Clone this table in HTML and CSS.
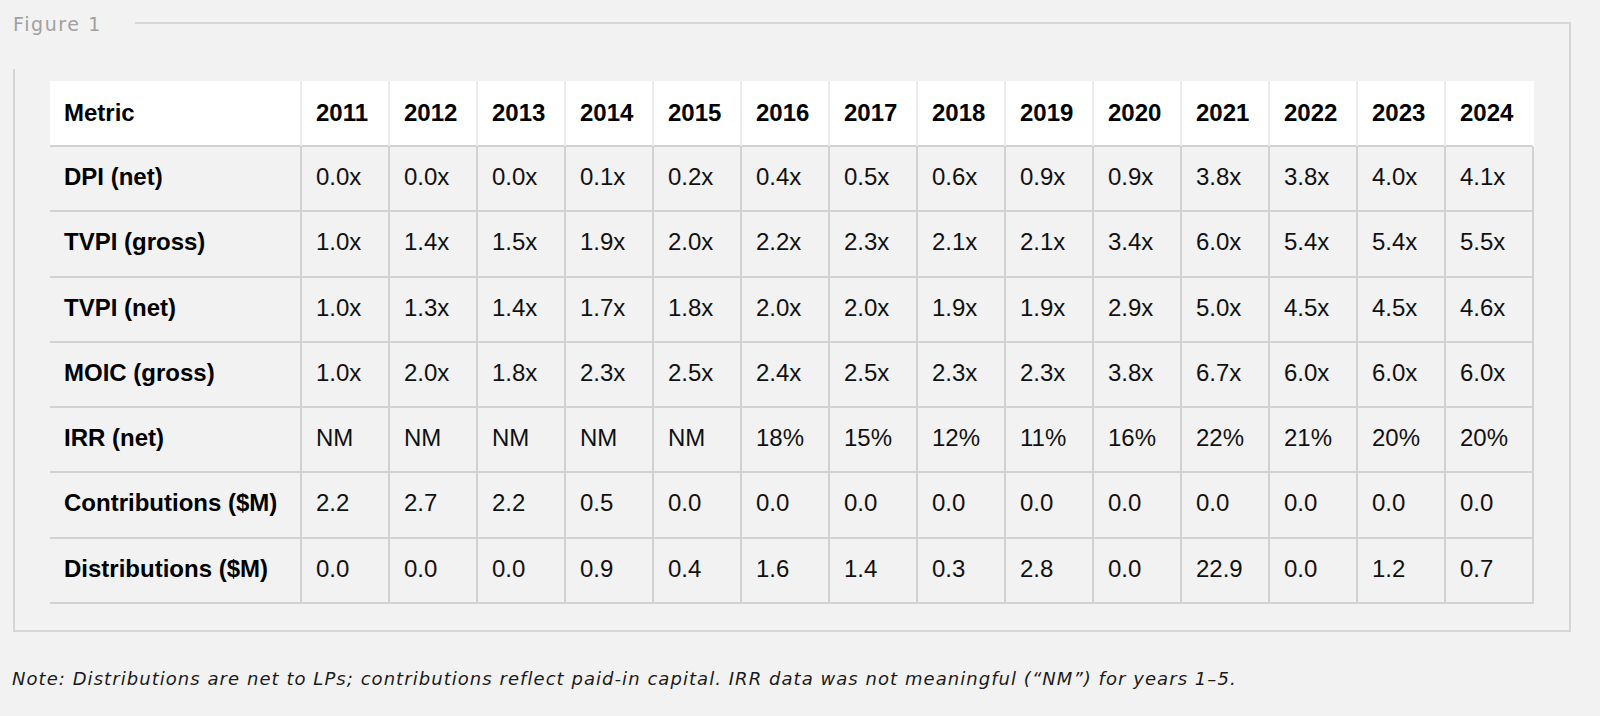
FILE: index.html
```html
<!DOCTYPE html>
<html lang="en">
<head>
<meta charset="utf-8">
<title>Figure 1</title>
<link rel="stylesheet" href="styles.css">
</head>
<body>
<figure class="figure">
  <div class="frame">
    <div class="legend"><span class="legend-text">Figure 1</span></div>
    <table class="data">
      <thead>
        <tr>
          <th class="label">Metric</th>
          <th>2011</th><th>2012</th><th>2013</th><th>2014</th><th>2015</th><th>2016</th><th>2017</th>
          <th>2018</th><th>2019</th><th>2020</th><th>2021</th><th>2022</th><th>2023</th><th>2024</th>
        </tr>
      </thead>
      <tbody>
        <tr><th class="label" scope="row">DPI (net)</th>
          <td>0.0x</td><td>0.0x</td><td>0.0x</td><td>0.1x</td><td>0.2x</td><td>0.4x</td><td>0.5x</td><td>0.6x</td><td>0.9x</td><td>0.9x</td><td>3.8x</td><td>3.8x</td><td>4.0x</td><td>4.1x</td></tr>
        <tr><th class="label" scope="row">TVPI (gross)</th>
          <td>1.0x</td><td>1.4x</td><td>1.5x</td><td>1.9x</td><td>2.0x</td><td>2.2x</td><td>2.3x</td><td>2.1x</td><td>2.1x</td><td>3.4x</td><td>6.0x</td><td>5.4x</td><td>5.4x</td><td>5.5x</td></tr>
        <tr><th class="label" scope="row">TVPI (net)</th>
          <td>1.0x</td><td>1.3x</td><td>1.4x</td><td>1.7x</td><td>1.8x</td><td>2.0x</td><td>2.0x</td><td>1.9x</td><td>1.9x</td><td>2.9x</td><td>5.0x</td><td>4.5x</td><td>4.5x</td><td>4.6x</td></tr>
        <tr><th class="label" scope="row">MOIC (gross)</th>
          <td>1.0x</td><td>2.0x</td><td>1.8x</td><td>2.3x</td><td>2.5x</td><td>2.4x</td><td>2.5x</td><td>2.3x</td><td>2.3x</td><td>3.8x</td><td>6.7x</td><td>6.0x</td><td>6.0x</td><td>6.0x</td></tr>
        <tr><th class="label" scope="row">IRR (net)</th>
          <td>NM</td><td>NM</td><td>NM</td><td>NM</td><td>NM</td><td>18%</td><td>15%</td><td>12%</td><td>11%</td><td>16%</td><td>22%</td><td>21%</td><td>20%</td><td>20%</td></tr>
        <tr><th class="label" scope="row">Contributions ($M)</th>
          <td>2.2</td><td>2.7</td><td>2.2</td><td>0.5</td><td>0.0</td><td>0.0</td><td>0.0</td><td>0.0</td><td>0.0</td><td>0.0</td><td>0.0</td><td>0.0</td><td>0.0</td><td>0.0</td></tr>
        <tr><th class="label" scope="row">Distributions ($M)</th>
          <td>0.0</td><td>0.0</td><td>0.0</td><td>0.9</td><td>0.4</td><td>1.6</td><td>1.4</td><td>0.3</td><td>2.8</td><td>0.0</td><td>22.9</td><td>0.0</td><td>1.2</td><td>0.7</td></tr>
      </tbody>
    </table>
  </div>
  <figcaption class="note">Note: Distributions are net to LPs; contributions reflect paid-in capital. IRR data was not meaningful (“NM”) for years 1–5.</figcaption>
</figure>
</body>
</html>
```

FILE: styles.css
```css
html, body {
  margin: 0;
  padding: 0;
  background: #f2f2f2;
}

.figure {
  margin: 0;
  padding: 22px 29px 0 13px;
}

.frame {
  position: relative;
  border: 2px solid #d6d6d6;
  padding: 57px 35px 26px 35px;
}

.legend {
  position: absolute;
  left: -2px;
  top: -2px;
  width: 122px;
  height: 47px;
  background: #f2f2f2;
}

.legend-text {
  display: block;
  margin-top: -10px;
  font-family: "DejaVu Sans", sans-serif;
  font-size: 19px;
  line-height: 24px;
  letter-spacing: 1.6px;
  color: #a0a0a0;
}

.data {
  border-collapse: separate;
  border-spacing: 0;
  table-layout: fixed;
  width: 1484px;
  font-family: "Liberation Sans", Arial, sans-serif;
  font-size: 24px;
  line-height: 24px;
  color: #111;
}

.data th,
.data td {
  text-align: left;
  white-space: nowrap;
  padding: 18px 0 21.3px 14px;
  border-right: 2px solid #d2d2d2;
  border-bottom: 2px solid #d2d2d2;
  width: 72px;
}

.data th {
  font-weight: bold;
  color: #000;
}

.data .label {
  width: 236px;
}

.data thead th {
  background: #ffffff;
  padding: 20px 0 20px 14px;
  border-right-color: #ececec;
  border-bottom-color: #d2d2d2;
}

.data thead th:last-child {
  border-right-color: #ffffff;
}

.data tbody td {
  font-weight: normal;
}

.note {
  margin: 35px 0 0 -1px;
  font-family: "DejaVu Sans", sans-serif;
  font-style: italic;
  font-size: 18px;
  line-height: 24px;
  letter-spacing: 1.05px;
  color: #1a1a1a;
}
```
